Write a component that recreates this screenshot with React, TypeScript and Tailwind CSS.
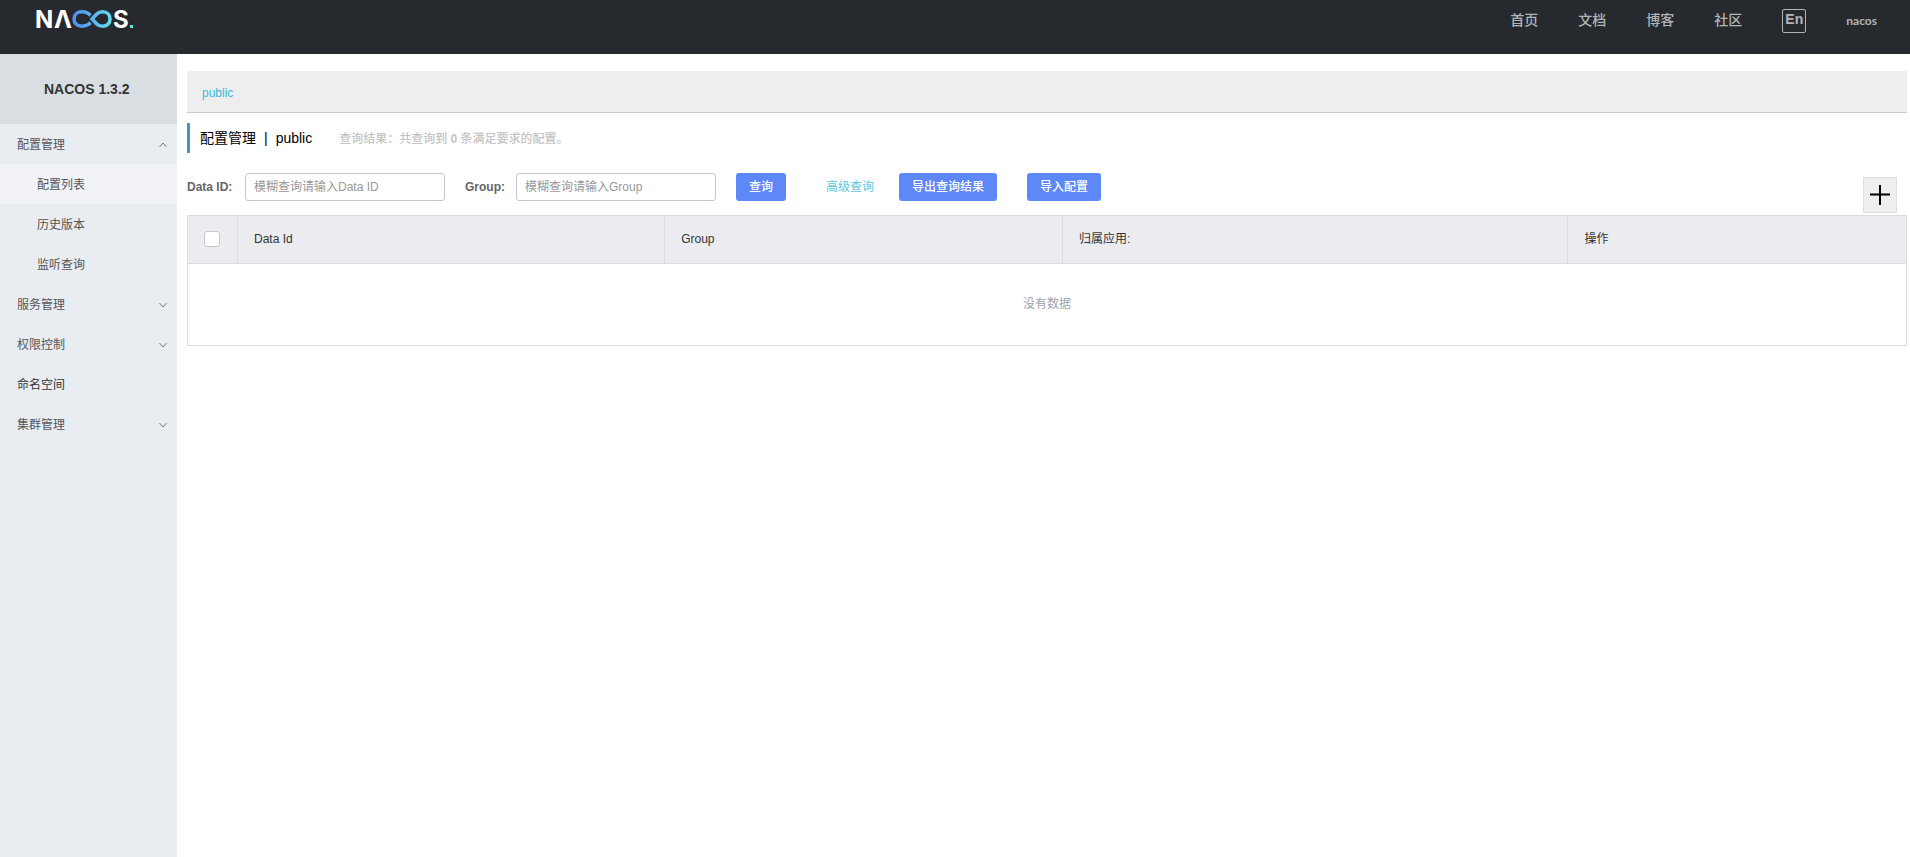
import { useState } from "react";

const navLinks = ["首页", "文档", "博客", "社区"];

type MenuItem = {
  label: string;
  children?: string[];
  open?: boolean;
};

const menu: MenuItem[] = [
  { label: "配置管理", children: ["配置列表", "历史版本", "监听查询"], open: true },
  { label: "服务管理", children: [] },
  { label: "权限控制", children: [] },
  { label: "命名空间" },
  { label: "集群管理", children: [] },
];

function Logo() {
  return (
    <svg
      width="108"
      height="40"
      viewBox="-4 -9 108 40"
      role="img"
      aria-label="NACOS"
      className="font-['Inter',sans-serif] font-bold"
    >
      <defs>
        <linearGradient id="loop" x1="35" y1="0" x2="75" y2="0" gradientUnits="userSpaceOnUse">
          <stop offset="0" stopColor="#4f8cf6" />
          <stop offset="0.5" stopColor="#5cb3f0" />
          <stop offset="1" stopColor="#62e0ea" />
        </linearGradient>
      </defs>
      <g fill="#ffffff" fontSize="24">
        <text x="-2" y="19">N</text>
        <text x="17" y="19">Λ</text>
        <text x="76" y="19">S</text>
      </g>
      <g fill="none" stroke="url(#loop)" strokeWidth="3.6">
        <path d="M53.5 6.4 L51.5 4.6 C49.5 3.2 47.5 2.8 45 2.8 C40.3 2.8 37 5.8 37 10 C37 14.2 40.3 17.2 45 17.2 C47.5 17.2 49.5 16.8 51.5 15.4 L53.5 13.6" />
        <path d="M55 10 L59.5 5.2 C61.5 3.4 63.5 2.8 65.5 2.8 C70 2.8 73 5.8 73 10 C73 14.2 70 17.2 65.5 17.2 C63.5 17.2 61.5 16.6 59.5 14.8 Z" />
      </g>
      <rect x="93" y="16" width="3" height="3" fill="#62e0ea" />
    </svg>
  );
}

function Chevron({ up }: { up?: boolean }) {
  return (
    <svg width="8" height="6" viewBox="0 0 8 6" fill="none" stroke="#777777" aria-hidden="true">
      <path d={up ? "M0.5 5 L4 1 L7.5 5" : "M0.5 1 L4 5 L7.5 1"} />
    </svg>
  );
}

function Header() {
  return (
    <header className="flex h-[54px] items-start justify-between bg-[#262a2f] pr-[33px] pl-[33px]">
      <a href="#home" className="block">
        <Logo />
      </a>
      <nav className="mt-2 flex h-6 items-center gap-10 text-sm text-[#b3b4b6]">
        {navLinks.map((text) => (
          <a key={text} href={"#" + text} className="font-medium">
            {text}
          </a>
        ))}
        <button
          type="button"
          className="mt-px flex size-6 items-center justify-center rounded-xs border border-[#b3b4b6] pb-1 font-bold"
        >
          En
        </button>
        <a href="#user" className="pt-px font-['Lato',sans-serif] text-xs font-bold">
          nacos
        </a>
      </nav>
    </header>
  );
}

function Sidebar() {
  const [open, setOpen] = useState<Record<string, boolean>>(
    Object.fromEntries(menu.map((item) => [item.label, Boolean(item.open)])),
  );
  return (
    <aside className="w-[177px] shrink-0 bg-[#e9ecf1] text-xs text-[#555555]">
      <h1 className="flex h-[70px] items-center bg-[#d9dee2] pl-11 text-sm font-bold text-[#333333]">
        NACOS 1.3.2
      </h1>
      <ul>
        {menu.map((item) => (
          <li key={item.label}>
            {item.children ? (
              <button
                type="button"
                aria-expanded={open[item.label]}
                onClick={() => setOpen({ ...open, [item.label]: !open[item.label] })}
                className="flex h-10 w-full items-center justify-between pt-0.5 pr-[10px] pl-[17px]"
              >
                {item.label}
                <Chevron up={open[item.label]} />
              </button>
            ) : (
              <a href="#namespace" className="flex h-10 items-center pt-0.5 pl-[17px] text-[#333333]">
                {item.label}
              </a>
            )}
            {item.children && open[item.label] && (
              <ul>
                {item.children.map((child, i) => (
                  <li key={child}>
                    <a
                      href={"#" + child}
                      className={
                        i === 0
                          ? "flex h-10 items-center bg-[#f2f3f7] pt-0.5 pl-[37px]"
                          : "flex h-10 items-center pt-0.5 pl-[37px]"
                      }
                    >
                      {child}
                    </a>
                  </li>
                ))}
              </ul>
            )}
          </li>
        ))}
      </ul>
    </aside>
  );
}

const inputClass =
  "h-7 w-[200px] rounded-[3px] border border-[#c4c6cf] bg-white px-2 text-xs text-[#333333] outline-none placeholder:text-[#999999]";
const buttonClass = "h-7 rounded-[3px] bg-[#5e87f8] px-[13px] text-xs font-medium text-white";

function SearchForm() {
  return (
    <form
      className="flex h-[42px] items-start justify-between pr-[10px]"
      onSubmit={(e) => e.preventDefault()}
    >
      <div className="flex items-center">
        <label htmlFor="dataId" className="w-[58px] text-xs font-bold text-[#666666]">
          Data ID:
        </label>
        <input id="dataId" className={inputClass} placeholder="模糊查询请输入Data ID" />
        <label htmlFor="group" className="ml-5 w-[51px] text-xs font-bold text-[#666666]">
          Group:
        </label>
        <input id="group" className={inputClass} placeholder="模糊查询请输入Group" />
        <button type="submit" className={buttonClass + " ml-5"}>
          查询
        </button>
        <a href="#advanced" className="ml-10 text-xs text-[#5bc8de]">
          高级查询
        </a>
        <button type="button" className={buttonClass + " ml-[25px]"}>
          导出查询结果
        </button>
        <button type="button" className={buttonClass + " ml-[30px]"}>
          导入配置
        </button>
      </div>
      <button
        type="button"
        aria-label="新建配置"
        className="mt-1 flex h-9 w-[34px] items-center justify-center border border-[#dcdde0] bg-[#eeeeee]"
      >
        <svg width="20" height="20" viewBox="0 0 20 20" stroke="#000000" strokeWidth="2" aria-hidden="true">
          <path d="M10 0 V20 M0 9.5 H20" />
        </svg>
      </button>
    </form>
  );
}

function ConfigTable() {
  const th = "border border-[#dcdde0] px-4 pb-0.5 text-left font-normal";
  return (
    <table className="w-full table-fixed border-collapse text-xs text-[#333333]">
      <colgroup>
        <col className="w-[50px]" />
        <col className="w-[24.85%]" />
        <col className="w-[23.15%]" />
        <col className="w-[29.4%]" />
        <col />
      </colgroup>
      <thead>
        <tr className="h-12 bg-[#ebecf0]">
          <th className={th}>
            <input
              type="checkbox"
              aria-label="全选"
              className="block size-4 appearance-none rounded-[3px] border border-[#c4c6cf] bg-white checked:bg-[#5e87f8]"
            />
          </th>
          <th className={th}>Data Id</th>
          <th className={th}>Group</th>
          <th className={th}>归属应用:</th>
          <th className={th}>操作</th>
        </tr>
      </thead>
      <tbody>
        <tr className="h-[82px]">
          <td colSpan={5} className="border border-[#dcdde0] pb-0.5 text-center text-[#a0a2ad]">
            没有数据
          </td>
        </tr>
      </tbody>
    </table>
  );
}

export default function App() {
  return (
    <div className="flex min-h-screen flex-col bg-white font-['Liberation_Sans','Noto_Sans_CJK_SC',sans-serif]">
      <Header />
      <div className="flex flex-1">
        <Sidebar />
        <main className="min-w-0 flex-1 pt-[17px] pr-[3px] pl-[10px]">
          <div className="flex h-[42px] items-center border-b border-[#cccccc] bg-[#eeeeee] pt-0.5 pl-[15px]">
            <a href="#public" className="text-xs text-[#3eb8d6]">
              public
            </a>
          </div>
          <div className="mt-[10px] mb-5 flex h-[30px] items-center border-l-3 border-[#4594c8] pl-[10px]">
            <h2 className="flex gap-2 text-sm text-black">
              <span>配置管理</span>
              <span>|</span>
              <span>public</span>
            </h2>
            <p className="ml-[27px] pt-px text-xs font-medium text-[#c4c4c4]">
              查询结果：共查询到 <strong className="font-bold">0</strong> 条满足要求的配置。
            </p>
          </div>
          <SearchForm />
          <ConfigTable />
        </main>
      </div>
    </div>
  );
}
